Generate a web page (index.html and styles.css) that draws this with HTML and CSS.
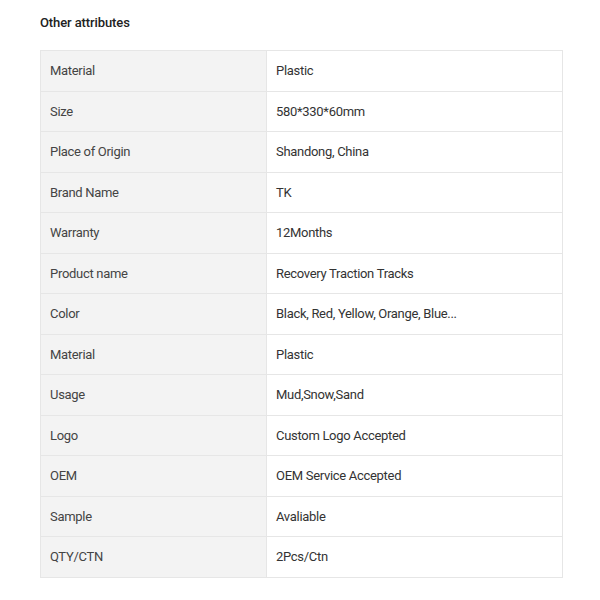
FILE: index.html
```html
<!DOCTYPE html>
<html>
<head>
<meta charset="utf-8">
<link rel="stylesheet" href="styles.css">
</head>
<body>
<div class="page">
  <h3 class="title">Other attributes</h3>
  <table class="attrs">
    <tr><td class="k">Material</td><td class="v">Plastic</td></tr>
    <tr><td class="k">Size</td><td class="v">580*330*60mm</td></tr>
    <tr><td class="k">Place of Origin</td><td class="v">Shandong, China</td></tr>
    <tr><td class="k">Brand Name</td><td class="v">TK</td></tr>
    <tr><td class="k">Warranty</td><td class="v">12Months</td></tr>
    <tr><td class="k">Product name</td><td class="v">Recovery Traction Tracks</td></tr>
    <tr><td class="k">Color</td><td class="v">Black, Red, Yellow, Orange, Blue...</td></tr>
    <tr><td class="k">Material</td><td class="v">Plastic</td></tr>
    <tr><td class="k">Usage</td><td class="v">Mud,Snow,Sand</td></tr>
    <tr><td class="k">Logo</td><td class="v">Custom Logo Accepted</td></tr>
    <tr><td class="k">OEM</td><td class="v">OEM Service Accepted</td></tr>
    <tr><td class="k">Sample</td><td class="v">Avaliable</td></tr>
    <tr><td class="k">QTY/CTN</td><td class="v">2Pcs/Ctn</td></tr>
  </table>
  <h3 class="title next">Product description</h3>
</div>
</body>
</html>
```
FILE: styles.css
```css
html, body { margin: 0; padding: 0; background: #fff; }
body { font-family: Roboto, "Liberation Sans", sans-serif; color: #333; }
.page { padding: 14px 37px 0 40px; }
.title { margin: 0; font-size: 13px; font-weight: 500; line-height: 18px; color: #222; letter-spacing: -0.1px; }
.attrs { margin-top: 18px; width: 523px; border-collapse: collapse; font-size: 13px; letter-spacing: -0.3px; }
.attrs td { border: 1px solid #e6e6e6; padding: 10px 9px; line-height: 19.5px; }
.attrs .k { width: 207px; background: #f3f3f3; color: #444; }
.attrs .v { background: #fff; color: #333; }
.next { margin-top: 19px; }
```
